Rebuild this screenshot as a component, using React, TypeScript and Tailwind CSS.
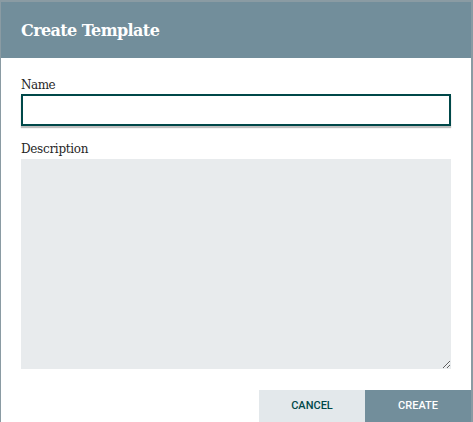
import React from 'react';

export default function App() {
  return (
    <div className="w-[473px] h-[422px] bg-[#8a9ba3] pt-[2px] pl-px pr-[2px] overflow-hidden">
      <div className="w-[470px] h-[420px] bg-white flex flex-col">
        {/* Header */}
        <div className="h-[56px] bg-[#728e9b] flex items-center px-5 shrink-0">
          <h1 className="text-white text-[16px] font-bold font-['DejaVu_Serif',serif] tracking-[-0.6px] pt-px">
            Create Template
          </h1>
        </div>

        {/* Body */}
        <div className="flex-1 flex flex-col px-5 pt-[19px]">
          <label className="text-[12px] text-[#262626] font-['DejaVu_Serif',serif] leading-[16px] tracking-[-0.5px]">
            Name
          </label>
          <input
            type="text"
            className="mt-px h-[32px] w-[430px] border-2 border-[#004849] bg-white shadow-[0_2px_1px_rgba(0,0,0,0.25)] outline-none"
          />
          <label className="mt-[15px] text-[12px] text-[#262626] font-['DejaVu_Serif',serif] leading-[16px] tracking-[-0.3px]">
            Description
          </label>
          <textarea className="mt-[2px] h-[210px] w-[430px] bg-[#e8ebed] border-none outline-none resize-y" />
        </div>

        {/* Footer buttons */}
        <div className="flex justify-end shrink-0">
          <button className="w-[106px] h-[32px] bg-[#e3e8eb] text-[#004849] text-[11px] font-medium uppercase font-['Roboto',sans-serif]">
            Cancel
          </button>
          <button className="w-[106px] h-[32px] bg-[#728e9b] text-white text-[11px] font-medium uppercase font-['Roboto',sans-serif]">
            Create
          </button>
        </div>
      </div>
    </div>
  );
}
